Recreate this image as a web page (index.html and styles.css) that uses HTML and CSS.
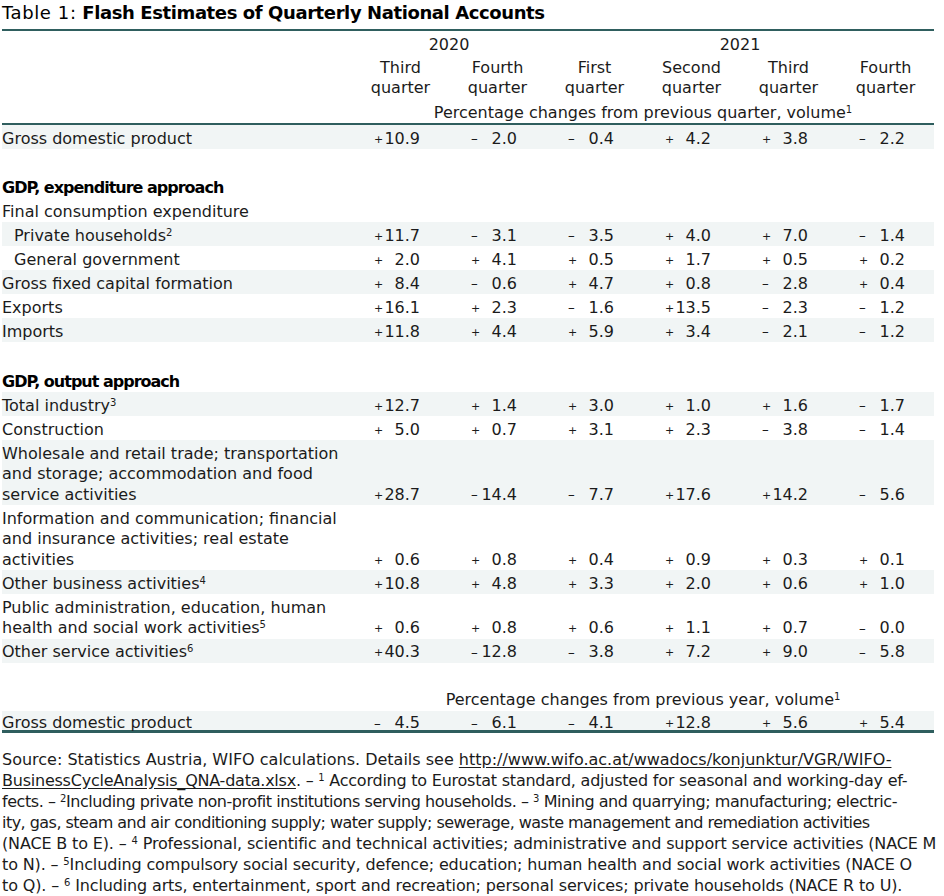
FILE: index.html
```html
<!DOCTYPE html>
<html lang="en">
<head>
<meta charset="utf-8">
<title>Table 1: Flash Estimates of Quarterly National Accounts</title>
<link rel="stylesheet" href="styles.css">
</head>
<body>
<div class="page">
  <div class="title"><span class="lead">Table 1:</span> <b>Flash Estimates of Quarterly National Accounts</b></div>
  <table class="qna">
    <colgroup>
      <col class="c-label"><col class="c-q"><col class="c-q"><col class="c-q"><col class="c-q"><col class="c-q"><col class="c-q">
    </colgroup>
    <thead>
      <tr class="years"><td></td><td colspan="2">2020</td><td colspan="4">2021</td></tr>
      <tr class="quarters"><td></td><td>Third<br>quarter</td><td>Fourth<br>quarter</td><td>First<br>quarter</td><td>Second<br>quarter</td><td>Third<br>quarter</td><td>Fourth<br>quarter</td></tr>
      <tr class="unit"><td></td><td colspan="6">Percentage changes from previous quarter, volume<sup>1</sup></td></tr>
    </thead>
    <tbody>
      <tr class="sh"><td class="lbl">Gross domestic product</td>
        <td class="n"><span class="v"><span class="s">+</span><span>10.9</span></span></td>
        <td class="n"><span class="v"><span class="s m">–</span><span>2.0</span></span></td>
        <td class="n"><span class="v"><span class="s m">–</span><span>0.4</span></span></td>
        <td class="n"><span class="v"><span class="s">+</span><span>4.2</span></span></td>
        <td class="n"><span class="v"><span class="s">+</span><span>3.8</span></span></td>
        <td class="n"><span class="v"><span class="s m">–</span><span>2.2</span></span></td></tr>
      <tr class="blank"><td colspan="7"></td></tr>
      <tr><td class="lbl head" colspan="7">GDP, expenditure approach</td></tr>
      <tr><td class="lbl" colspan="7">Final consumption expenditure</td></tr>
      <tr class="sh"><td class="lbl ind">Private households<sup>2</sup></td>
        <td class="n"><span class="v"><span class="s">+</span><span>11.7</span></span></td>
        <td class="n"><span class="v"><span class="s m">–</span><span>3.1</span></span></td>
        <td class="n"><span class="v"><span class="s m">–</span><span>3.5</span></span></td>
        <td class="n"><span class="v"><span class="s">+</span><span>4.0</span></span></td>
        <td class="n"><span class="v"><span class="s">+</span><span>7.0</span></span></td>
        <td class="n"><span class="v"><span class="s m">–</span><span>1.4</span></span></td></tr>
      <tr><td class="lbl ind">General government</td>
        <td class="n"><span class="v"><span class="s">+</span><span>2.0</span></span></td>
        <td class="n"><span class="v"><span class="s">+</span><span>4.1</span></span></td>
        <td class="n"><span class="v"><span class="s">+</span><span>0.5</span></span></td>
        <td class="n"><span class="v"><span class="s">+</span><span>1.7</span></span></td>
        <td class="n"><span class="v"><span class="s">+</span><span>0.5</span></span></td>
        <td class="n"><span class="v"><span class="s">+</span><span>0.2</span></span></td></tr>
      <tr class="sh"><td class="lbl">Gross fixed capital formation</td>
        <td class="n"><span class="v"><span class="s">+</span><span>8.4</span></span></td>
        <td class="n"><span class="v"><span class="s m">–</span><span>0.6</span></span></td>
        <td class="n"><span class="v"><span class="s">+</span><span>4.7</span></span></td>
        <td class="n"><span class="v"><span class="s">+</span><span>0.8</span></span></td>
        <td class="n"><span class="v"><span class="s m">–</span><span>2.8</span></span></td>
        <td class="n"><span class="v"><span class="s">+</span><span>0.4</span></span></td></tr>
      <tr><td class="lbl">Exports</td>
        <td class="n"><span class="v"><span class="s">+</span><span>16.1</span></span></td>
        <td class="n"><span class="v"><span class="s">+</span><span>2.3</span></span></td>
        <td class="n"><span class="v"><span class="s m">–</span><span>1.6</span></span></td>
        <td class="n"><span class="v"><span class="s">+</span><span>13.5</span></span></td>
        <td class="n"><span class="v"><span class="s m">–</span><span>2.3</span></span></td>
        <td class="n"><span class="v"><span class="s m">–</span><span>1.2</span></span></td></tr>
      <tr class="sh"><td class="lbl">Imports</td>
        <td class="n"><span class="v"><span class="s">+</span><span>11.8</span></span></td>
        <td class="n"><span class="v"><span class="s">+</span><span>4.4</span></span></td>
        <td class="n"><span class="v"><span class="s">+</span><span>5.9</span></span></td>
        <td class="n"><span class="v"><span class="s">+</span><span>3.4</span></span></td>
        <td class="n"><span class="v"><span class="s m">–</span><span>2.1</span></span></td>
        <td class="n"><span class="v"><span class="s m">–</span><span>1.2</span></span></td></tr>
      <tr class="blank blank2"><td colspan="7"></td></tr>
      <tr><td class="lbl head" colspan="7">GDP, output approach</td></tr>
      <tr class="sh"><td class="lbl">Total industry<sup>3</sup></td>
        <td class="n"><span class="v"><span class="s">+</span><span>12.7</span></span></td>
        <td class="n"><span class="v"><span class="s">+</span><span>1.4</span></span></td>
        <td class="n"><span class="v"><span class="s">+</span><span>3.0</span></span></td>
        <td class="n"><span class="v"><span class="s">+</span><span>1.0</span></span></td>
        <td class="n"><span class="v"><span class="s">+</span><span>1.6</span></span></td>
        <td class="n"><span class="v"><span class="s m">–</span><span>1.7</span></span></td></tr>
      <tr><td class="lbl">Construction</td>
        <td class="n"><span class="v"><span class="s">+</span><span>5.0</span></span></td>
        <td class="n"><span class="v"><span class="s">+</span><span>0.7</span></span></td>
        <td class="n"><span class="v"><span class="s">+</span><span>3.1</span></span></td>
        <td class="n"><span class="v"><span class="s">+</span><span>2.3</span></span></td>
        <td class="n"><span class="v"><span class="s m">–</span><span>3.8</span></span></td>
        <td class="n"><span class="v"><span class="s m">–</span><span>1.4</span></span></td></tr>
      <tr class="sh"><td class="lbl">Wholesale and retail trade; transportation<br>and storage; accommodation and food<br>service activities</td>
        <td class="n"><span class="v"><span class="s">+</span><span>28.7</span></span></td>
        <td class="n"><span class="v"><span class="s m">–</span><span>14.4</span></span></td>
        <td class="n"><span class="v"><span class="s m">–</span><span>7.7</span></span></td>
        <td class="n"><span class="v"><span class="s">+</span><span>17.6</span></span></td>
        <td class="n"><span class="v"><span class="s">+</span><span>14.2</span></span></td>
        <td class="n"><span class="v"><span class="s m">–</span><span>5.6</span></span></td></tr>
      <tr><td class="lbl">Information and communication; financial<br>and insurance activities; real estate<br>activities</td>
        <td class="n"><span class="v"><span class="s">+</span><span>0.6</span></span></td>
        <td class="n"><span class="v"><span class="s">+</span><span>0.8</span></span></td>
        <td class="n"><span class="v"><span class="s">+</span><span>0.4</span></span></td>
        <td class="n"><span class="v"><span class="s">+</span><span>0.9</span></span></td>
        <td class="n"><span class="v"><span class="s">+</span><span>0.3</span></span></td>
        <td class="n"><span class="v"><span class="s">+</span><span>0.1</span></span></td></tr>
      <tr class="sh"><td class="lbl">Other business activities<sup>4</sup></td>
        <td class="n"><span class="v"><span class="s">+</span><span>10.8</span></span></td>
        <td class="n"><span class="v"><span class="s">+</span><span>4.8</span></span></td>
        <td class="n"><span class="v"><span class="s">+</span><span>3.3</span></span></td>
        <td class="n"><span class="v"><span class="s">+</span><span>2.0</span></span></td>
        <td class="n"><span class="v"><span class="s">+</span><span>0.6</span></span></td>
        <td class="n"><span class="v"><span class="s">+</span><span>1.0</span></span></td></tr>
      <tr><td class="lbl">Public administration, education, human<br>health and social work activities<sup>5</sup></td>
        <td class="n"><span class="v"><span class="s">+</span><span>0.6</span></span></td>
        <td class="n"><span class="v"><span class="s">+</span><span>0.8</span></span></td>
        <td class="n"><span class="v"><span class="s">+</span><span>0.6</span></span></td>
        <td class="n"><span class="v"><span class="s">+</span><span>1.1</span></span></td>
        <td class="n"><span class="v"><span class="s">+</span><span>0.7</span></span></td>
        <td class="n"><span class="v"><span class="s m">–</span><span>0.0</span></span></td></tr>
      <tr class="sh"><td class="lbl">Other service activities<sup>6</sup></td>
        <td class="n"><span class="v"><span class="s">+</span><span>40.3</span></span></td>
        <td class="n"><span class="v"><span class="s m">–</span><span>12.8</span></span></td>
        <td class="n"><span class="v"><span class="s m">–</span><span>3.8</span></span></td>
        <td class="n"><span class="v"><span class="s">+</span><span>7.2</span></span></td>
        <td class="n"><span class="v"><span class="s">+</span><span>9.0</span></span></td>
        <td class="n"><span class="v"><span class="s m">–</span><span>5.8</span></span></td></tr>
      <tr class="blank blank3"><td colspan="7"></td></tr>
      <tr class="unit2"><td></td><td colspan="6">Percentage changes from previous year, volume<sup>1</sup></td></tr>
      <tr class="sh last"><td class="lbl">Gross domestic product</td>
        <td class="n"><span class="v"><span class="s m">–</span><span>4.5</span></span></td>
        <td class="n"><span class="v"><span class="s m">–</span><span>6.1</span></span></td>
        <td class="n"><span class="v"><span class="s m">–</span><span>4.1</span></span></td>
        <td class="n"><span class="v"><span class="s">+</span><span>12.8</span></span></td>
        <td class="n"><span class="v"><span class="s">+</span><span>5.6</span></span></td>
        <td class="n"><span class="v"><span class="s">+</span><span>5.4</span></span></td></tr>
    </tbody>
  </table>
  <div class="notes">
    <div class="l1">Source: Statistics Austria, WIFO calculations. Details see <span class="u">http://www.wifo.ac.at/wwadocs/konjunktur/VGR/WIFO-</span></div>
    <div class="l2"><span class="u">BusinessCycleAnalysis_QNA-data.xlsx</span>. – <sup>1</sup> According to Eurostat standard, adjusted for seasonal and working-day ef-</div>
    <div class="l3">fects. – <sup>2</sup>Including private non-profit institutions serving households. – <sup>3</sup> Mining and quarrying; manufacturing; electric-</div>
    <div class="l4">ity, gas, steam and air conditioning supply; water supply; sewerage, waste management and remediation activities</div>
    <div class="l5">(NACE B to E). – <sup>4</sup> Professional, scientific and technical activities; administrative and support service activities (NACE M</div>
    <div class="l6">to N). – <sup>5</sup>Including compulsory social security, defence; education; human health and social work activities (NACE O</div>
    <div class="l7">to Q). – <sup>6</sup> Including arts, entertainment, sport and recreation; personal services; private households (NACE R to U).</div>
  </div>
</div>
</body>
</html>
```
FILE: styles.css
```css
html, body {
  margin: 0;
  padding: 0;
  background: #ffffff;
}

body {
  font-family: "DejaVu Sans", sans-serif;
  font-size: 16px;
  color: #1b1b1b;
}

.page {
  padding-left: 2px;
  width: 932px;
}

.title {
  font-size: 18px;
  line-height: 24px;
  padding: 1px 0 4px;
  border-bottom: 2px solid #2f5e5e;
  color: #000;
  white-space: nowrap;
}

.title .lead {
  letter-spacing: 0.6px;
}

.title b {
  font-weight: bold;
  letter-spacing: -0.4px;
}

.qna {
  width: 932px;
  table-layout: fixed;
  border-collapse: separate;
  border-spacing: 0;
}

.c-label { width: 350px; }
.c-q { width: 97px; }

.qna td {
  padding: 0;
  white-space: nowrap;
}

.qna thead td {
  text-align: center;
  line-height: 20px;
}

.qna .years td { padding-top: 4px; }
.qna .quarters td { padding-top: 2.5px; }
.qna .unit td {
  padding-top: 5.5px;
  border-bottom: 2px solid #2f5e5e;
}

.qna tbody td {
  padding: 3.5px 0 0;
  line-height: 20.5px;
  vertical-align: bottom;
}

.qna tbody .blank td {
  padding: 0;
  height: 25px;
}

.qna tbody .blank2 td {
  height: 26px;
}

.qna tbody .blank3 td {
  height: 23px;
}

.sh { background: #f1f5f5; }

.lbl { text-align: left; }
.ind { padding-left: 12px !important; }

.head {
  font-weight: bold;
  letter-spacing: -1px;
  color: #000;
}

.n { padding-left: 22px !important; }

.v {
  display: inline-flex;
  justify-content: space-between;
  align-items: baseline;
  width: 46px;
}

.s {
  font-size: 11px;
  line-height: 5px;
  position: relative;
  top: -1px;
}

.s.m {
  font-size: 13.5px;
  top: -0.5px;
}

.qna tbody .unit2 td {
  text-align: center;
  padding: 4.5px 0 0;
}

.qna tbody .last td {
  padding: 4.5px 0 0;
  line-height: 15px;
  border-bottom: 3px solid #2f5e5e;
}

sup {
  font-size: 10px;
  line-height: 0;
  vertical-align: 5px;
}

.notes {
  margin-top: 16px;
  line-height: 21px;
  white-space: nowrap;
}

.notes .l2 { letter-spacing: -0.23px; }
.notes .l3 { letter-spacing: -0.45px; }
.notes .l4 { letter-spacing: -0.53px; }
.notes .l5 { letter-spacing: -0.15px; }
.notes .l6 { letter-spacing: -0.14px; }
.notes .l7 { letter-spacing: -0.14px; }

.u {
  text-decoration: underline;
  text-underline-offset: 2px;
}
```
